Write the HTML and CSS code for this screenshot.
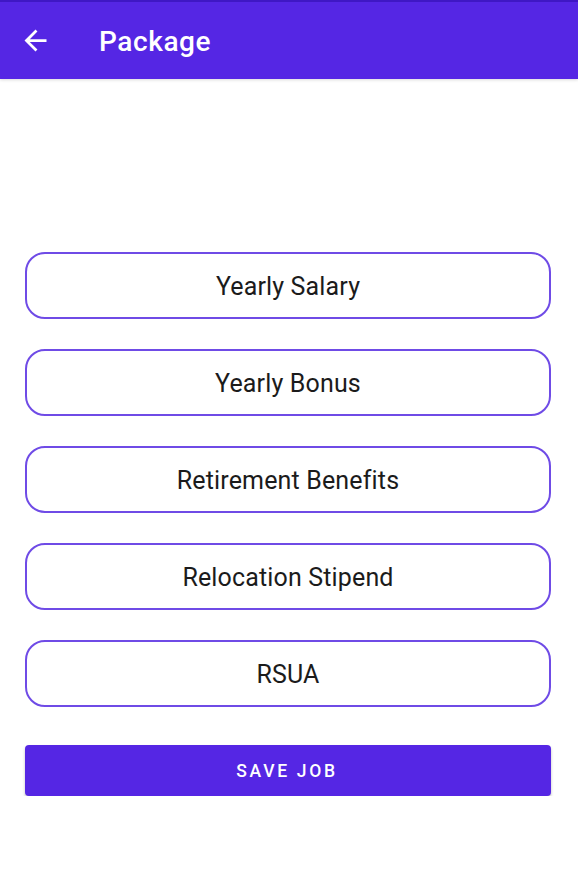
FILE: index.html
```html
<!DOCTYPE html>
<html>
<head>
<meta charset="utf-8">
<link rel="stylesheet" href="styles.css">
</head>
<body>
<div class="appbar">
  <svg class="back" width="33" height="33" viewBox="0 0 24 24"><path d="M20 11H7.83l5.59-5.59L12 4l-8 8 8 8 1.41-1.41L7.83 13H20v-2z" fill="#fff"/></svg>
  <div class="title">Package</div>
</div>
<div class="content">
  <div class="fields">
    <div class="field">Yearly Salary</div>
    <div class="field">Yearly Bonus</div>
    <div class="field">Retirement Benefits</div>
    <div class="field">Relocation Stipend</div>
    <div class="field">RSUA</div>
  </div>
  <button class="save">SAVE JOB</button>
</div>
</body>
</html>
```
FILE: styles.css
```css
html, body { margin: 0; padding: 0; background: #fff; }
body { font-family: Roboto, "Noto Sans", sans-serif; width: 578px; }
.appbar {
  height: 79px;
  background: #5526E4;
  border-top: 2px solid #3f17c4;
  box-sizing: border-box;
  display: flex;
  align-items: center;
  padding-left: 19px;
  box-shadow: 0 1px 3px rgba(0,0,0,0.15);
}
.back { margin-top: 0; flex: none; }
.title {
  color: #fff;
  font-size: 28px;
  font-weight: 500;
  margin-left: 47px;
  margin-top: 2px;
  letter-spacing: 0.6px;
}
.content { padding: 173px 27px 0 25px; }
.fields { display: flex; flex-direction: column; gap: 30px; }
.field {
  height: 67px;
  box-sizing: border-box;
  border: 2px solid #6f4be6;
  border-radius: 20px;
  display: flex;
  align-items: center;
  justify-content: center;
  font-size: 25px;
  letter-spacing: 0.15px;
  color: #1b1b1b;
  padding-top: 2px;
}
.save {
  margin-top: 38px;
  width: 100%;
  height: 51px;
  border: none;
  border-radius: 4px;
  background: #5526E4;
  color: #fff;
  font-family: Roboto, "Noto Sans", sans-serif;
  font-size: 17.5px;
  font-weight: 500;
  letter-spacing: 2.7px;
  padding-left: 4px;
  box-shadow: 0 2px 3px rgba(0,0,0,0.25);
  display: block;
}
```
